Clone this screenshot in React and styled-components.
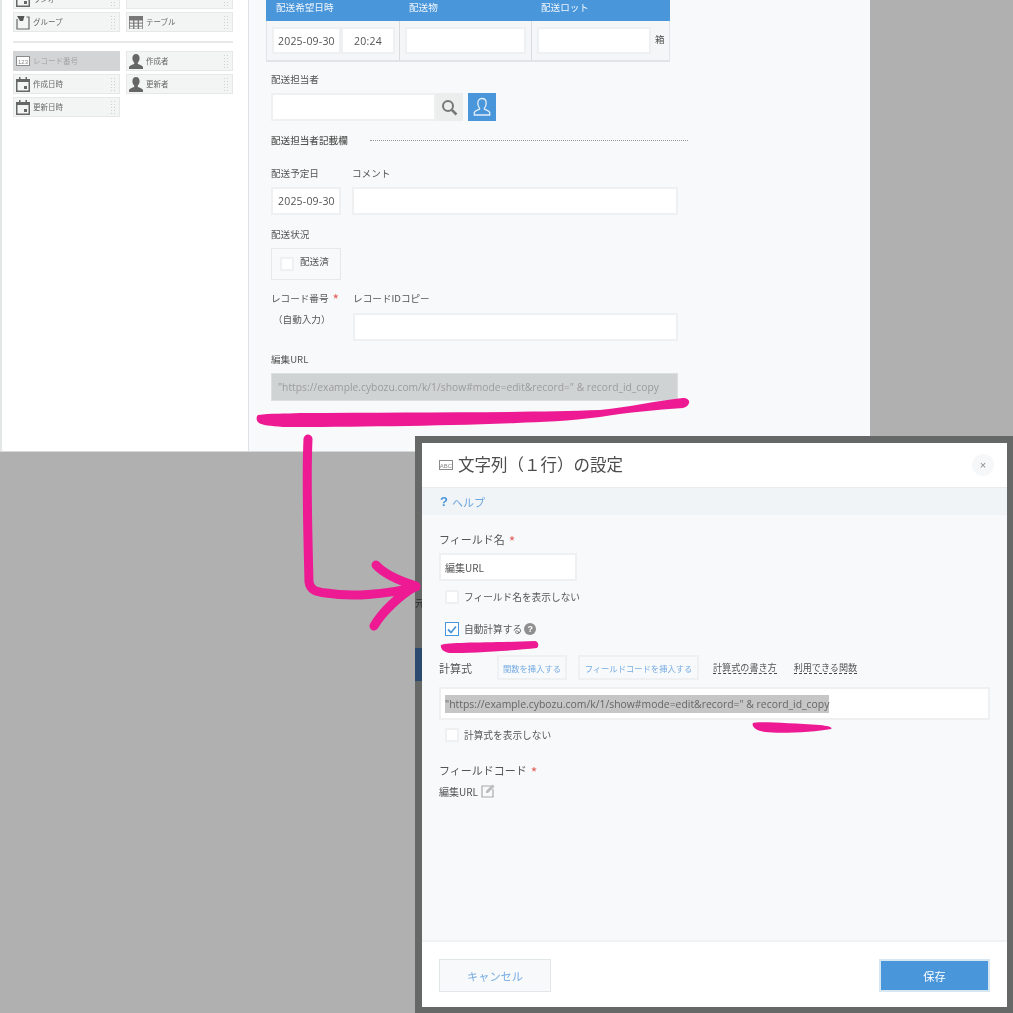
import React from 'react';
import styled, { createGlobalStyle } from 'styled-components';

const Global = createGlobalStyle`
    html, body {
        margin: 0;
        padding: 0;
        background: #b0b0b0;
    }
    body {
        font-family: "Noto Sans CJK JP", "Noto Sans", "Liberation Sans", sans-serif;
        color: #4d4d4d;
        font-size: 10px;
    }
`

const Page = styled.div`
    position: relative;
    width: 1013px;
    height: 1013px;
    overflow: hidden;
    background: #b0b0b0;
`
const Shot = styled.div`
    display: flex;
    width: 870px;
    height: 452px;
    overflow: hidden;
    border-bottom: 1px solid #d8d8d8;
    box-sizing: border-box;
    filter: blur(0.3px);
`

/* left palette */
const Palette = styled.div`
    width: 249px;
    flex: none;
    box-sizing: border-box;
    background: #fff;
    border-left: 2px solid #e4e7e8;
    border-right: 1px solid #dfe3e5;
    padding: 0 15px 0 11px;
`
const PartGrid = styled.div`
    display: grid;
    grid-template-columns: 107px 107px;
    column-gap: 6px;
    row-gap: 3px;
    margin-top: ${p => p.$top || 0}px;
`
const Divider = styled.div`
    height: 2px;
    background: #e6e8e9;
    margin: 9px 0 8px;
`
const Part = styled.div`
    height: 20px;
    display: flex;
    align-items: center;
    gap: 3px;
    box-sizing: border-box;
    padding: 0 2px;
    background: ${p => p.$active ? '#d2d4d5' : '#f3f4f4'};
    border: 1px solid ${p => p.$active ? '#d2d4d5' : '#e6e8e8'};
    color: ${p => p.$active ? '#a2a5a6' : '#666'};
    font-size: 7.5px;
    line-height: 1;
`
const PartName = styled.span`
    flex: 1;
    white-space: nowrap;
`
const Grip = styled.span`
    width: 6px;
    height: 14px;
    margin-right: 1px;
    flex: none;
    background-image: radial-gradient(#cfd1d2 0.8px, transparent 1px);
    background-size: 3px 3px;
`

/* form on the right */
const Form = styled.div`
    flex: 1;
    background: #f7f9fa;
    padding: 0 0 0 17px;
`
const SubTable = styled.div`
    width: 404px;
    margin-top: -6px;
`
const SubHead = styled.div`
    display: grid;
    grid-template-columns: 133px 132px 139px;
    height: 27px;
    align-items: end;
    background: #4a96db;
    color: #eef5fb;
    font-size: 9.6px;
    line-height: 20px;
    padding-bottom: 1px;
    box-sizing: border-box;
    & > span {
        padding-left: 10px;
        padding-bottom: 3px;
    }
`
const SubBody = styled.div`
    display: grid;
    grid-template-columns: 133px 132px 139px;
    height: 41px;
    box-sizing: border-box;
    background: #f5f6f7;
    border: 1px solid #e1e5e7;
    border-top: none;
    border-bottom-width: 2px;
`
const SubCell = styled.div`
    display: flex;
    align-items: flex-start;
    padding: 6px 0 0 5px;
    box-sizing: border-box;
    border-right: ${p => p.$last ? 'none' : '1px solid #d8dcde'};
`
const Box = styled.div`
    width: ${p => p.$w}px;
    height: ${p => p.$h || 28}px;
    flex: none;
    box-sizing: border-box;
    background: #fff;
    border: 2px solid #eef0f2;
    font-size: 10.5px;
    color: #555;
    display: flex;
    align-items: center;
    justify-content: ${p => p.$center ? 'center' : 'flex-start'};
    padding-left: ${p => p.$center ? 0 : (p.$pad || 5)}px;
    white-space: nowrap;
    letter-spacing: 0.2px;
    font-family: "Open Sans", "Noto Sans CJK JP", sans-serif;
`
const NameValue = styled.span`
    font-family: "Noto Sans CJK JP", sans-serif;
    font-size: 10px;
    letter-spacing: 0;
`
const Unit = styled.span`
    font-size: 9.5px;
    margin: 5px 0 0 4px;
`
const Field = styled.div`
    margin-left: 5px;
    margin-top: ${p => p.$top || 0}px;
`
const Label = styled.div`
    font-size: 9.6px;
    line-height: 14px;
    color: #555;
    white-space: nowrap;
    margin-bottom: ${p => p.$bottom ?? 7}px;
`
const Star = styled.span`
    color: #e4605a;
    font-size: 14px;
    line-height: 1;
    vertical-align: -3px;
    margin-left: 4px;
`
const Picker = styled.div`
    display: flex;
`
const SearchBtn = styled.div`
    width: 27px;
    height: 28px;
    background: #eceeee;
    display: flex;
    align-items: center;
    justify-content: center;
`
const UserBtn = styled.div`
    width: 28px;
    height: 28px;
    margin-left: 5px;
    background: #4a96db;
    display: flex;
    align-items: center;
    justify-content: center;
`
const SectionRow = styled.div`
    display: flex;
    align-items: center;
    width: 417px;
    margin: 12px 0 0 5px;
`
const SectionName = styled.span`
    font-size: 9.6px;
    font-weight: 500;
    line-height: 14px;
    color: #555;
    width: 99px;
    flex: none;
    white-space: nowrap;
`
const Dots = styled.span`
    flex: 1;
    border-top: 1px dotted #999;
`
const TwoCols = styled.div`
    display: flex;
    gap: ${p => p.$gap || 11}px;
    margin: ${p => p.$top || 0}px 0 0 5px;
`
const CheckFrame = styled.div`
    width: 70px;
    height: 32px;
    box-sizing: border-box;
    border: 1px solid #e6e8ea;
    display: flex;
    align-items: center;
    padding: 0 0 1px 8px;
    gap: 6px;
    font-size: 9.6px;
    color: #555;
`
const FrameText = styled.span`
    margin-bottom: 5px;
`
const Check = styled.span`
    width: 14px;
    height: 14px;
    flex: none;
    box-sizing: border-box;
    background: #fff;
    border: ${p => p.$on ? '1px solid #4a96db' : '2px solid #eef0f2'};
    display: flex;
    align-items: center;
    justify-content: center;
`
const AutoNote = styled.div`
    font-size: 9.6px;
    line-height: 14px;
    padding-left: 2px;
    margin-top: 6px;
    color: #555;
`
const Computed = styled.div`
    width: 407px;
    height: 28px;
    box-sizing: border-box;
    background: #d0d3d3;
    border: 1px solid #dcdfdf;
    padding-left: 6px;
    display: flex;
    align-items: center;
    color: #999c9d;
    font-size: 10.3px;
    white-space: nowrap;
    font-family: "Open Sans", sans-serif;
`

/* dialog */
const Dialog = styled.div`
    position: absolute;
    left: 415px;
    top: 436px;
    width: 598px;
    height: 577px;
    box-sizing: border-box;
    border: 7px solid #666867;
    border-right-width: 6px;
    border-bottom-width: 6px;
    background: #f7f9fa;
    display: flex;
    flex-direction: column;
    filter: blur(0.3px);
`
const DialogHead = styled.div`
    height: 44px;
    flex: none;
    background: #fff;
    display: flex;
    align-items: center;
    padding: 0 13px 0 17px;
    gap: 5px;
`
const DialogTitle = styled.div`
    flex: 1;
    font-size: 16.5px;
    color: #4d4d4d;
    white-space: nowrap;
    padding-bottom: 3px;
`
const Close = styled.div`
    width: 22px;
    height: 22px;
    border-radius: 50%;
    background: #f6f7f9;
    color: #8a8a8a;
    font-size: 11px;
    display: flex;
    align-items: center;
    justify-content: center;
    font-family: "Liberation Sans", sans-serif;
`
const HelpBar = styled.div`
    height: 28px;
    flex: none;
    background: #f1f4f6;
    border-top: 1px solid #e8ecee;
    box-sizing: border-box;
    padding-left: 18px;
    display: flex;
    align-items: center;
    gap: 4px;
    color: #6ba6e0;
    font-size: 11px;
`
const HelpMark = styled.b`
    font-family: "Liberation Sans", sans-serif;
    font-size: 13px;
    color: #4a96db;
`
const DialogBody = styled.div`
    flex: 1;
    padding: 15px 17px 0;
`
const DLabel = styled.div`
    font-size: 11px;
    line-height: 18px;
    height: 18px;
    color: #555;
    white-space: nowrap;
    margin: ${p => p.$top || 0}px 0 ${p => p.$bottom || 0}px;
`
const CheckRow = styled.label`
    display: flex;
    align-items: center;
    gap: 5px;
    margin: ${p => p.$top || 0}px 0 0 6px;
    height: 14px;
    font-size: 9.7px;
    color: #555;
    white-space: nowrap;
`
const QMark = styled.span`
    width: 12px;
    height: 12px;
    border-radius: 50%;
    background: #8f8f8f;
    color: #fff;
    font-size: 9px;
    font-weight: 700;
    margin-left: -3px;
    display: flex;
    align-items: center;
    justify-content: center;
    font-family: "Liberation Sans", sans-serif;
`
const FormulaTools = styled.div`
    display: flex;
    align-items: center;
    height: 25px;
    margin-top: 19px;
`
const FormulaLabel = styled.span`
    width: 58px;
    font-size: 11px;
    color: #555;
    flex: none;
`
const GhostBtn = styled.span`
    height: 25px;
    box-sizing: border-box;
    border: 2px solid #eef0f2;
    color: #78ace3;
    font-size: 8.3px;
    display: flex;
    align-items: center;
    justify-content: center;
    width: ${p => p.$w}px;
    margin-right: ${p => p.$right}px;
    white-space: nowrap;
`
const DocLink = styled.span`
    font-size: 9.1px;
    line-height: 12px;
    color: #555;
    border-bottom: 1px dashed #444;
    margin-right: 17px;
    white-space: nowrap;
`
const Formula = styled.div`
    width: 551px;
    height: 33px;
    margin-top: 7px;
    box-sizing: border-box;
    background: #fff;
    border: 2px solid #eef0f2;
    padding-left: 4px;
    display: flex;
    align-items: center;
`
const Selected = styled.span`
    background: #c6c6c6;
    color: #666;
    font-size: 10.4px;
    line-height: 18px;
    white-space: nowrap;
    font-family: "Open Sans", sans-serif;
`
const CodeRow = styled.div`
    display: flex;
    align-items: center;
    gap: 3px;
    font-size: 10px;
    color: #555;
    margin-top: 5px;
    height: 14px;
`
const Footer = styled.div`
    height: 67px;
    flex: none;
    background: #fff;
    border-top: 2px solid #f0f2f3;
    box-sizing: border-box;
    padding: 17px 17px 0;
    display: flex;
    justify-content: space-between;
    align-items: flex-start;
`
const FootBtn = styled.div`
    width: ${p => p.$w}px;
    height: 33px;
    box-sizing: border-box;
    display: flex;
    align-items: center;
    justify-content: center;
    font-size: 11.2px;
    background: ${p => p.$primary ? '#4a96db' : '#f7f9fa'};
    color: ${p => p.$primary ? '#fff' : '#78ace3'};
    border: ${p => p.$primary ? '2px solid #d7e6f3' : '1px solid #e1e6e9'};
`
const Behind = styled.span`
    position: absolute;
    left: -7px;
    top: ${p => p.$top}px;
    width: 7px;
    height: ${p => p.$h}px;
    overflow: hidden;
    background: ${p => p.$bg || 'transparent'};
    color: #2a2a2a;
    font-size: 10px;
    line-height: ${p => p.$h}px;
`
const Marks = styled.svg`
    position: absolute;
    left: 0;
    top: 0;
    pointer-events: none;
`

function CalendarIcon() {
    return (
        <svg width="14" height="15" viewBox="0 0 14 15">
            <path d="M3 0h1.500v2h5V0H11v2h3v13H0V2h3z" fill="#666" />
            <rect x="1.500" y="5" width="11" height="8.500" fill="#f3f4f4" />
            <rect x="8" y="9" width="3" height="3" fill="#666" />
        </svg>
    )
}
function PersonIcon() {
    return (
        <svg width="14" height="15" viewBox="0 0 14 15">
            <path d="M7 0c2.400 0 3.600 1.900 3.600 4.200 0 2-.8 3.500-1.800 4.400v1.300c2 .7 4.700 1.500 5.200 3V15H0v-2.100c.5-1.500 3.200-2.300 5.200-3V8.600C4.200 7.700 3.400 6.200 3.400 4.200 3.400 1.900 4.600 0 7 0z" fill="#666" />
        </svg>
    )
}
function GroupIcon() {
    return (
        <svg width="14" height="15" viewBox="0 0 14 15">
            <path d="M1 4v10h12V2h-2.500" fill="none" stroke="#666" strokeWidth="1.200" />
            <path d="M1 1h7.500L7 6H4z" fill="#555" />
        </svg>
    )
}
function TableIcon() {
    return (
        <svg width="14" height="13" viewBox="0 0 14 13">
            <rect width="14" height="13" fill="#777" />
            {[4.5, 7.6, 10.6].map(y => [0.8, 5.4, 10].map(x => (
                <rect key={`${x}-${y}`} x={x} y={y} width="3.300" height="2.100" fill="#f3f4f4" />
            )))}
        </svg>
    )
}
function TagIcon({ label }) {
    return (
        <svg width="14" height="10" viewBox="0 0 14 10">
            <rect x="0.500" y="0.500" width="13" height="9" fill="#fff" stroke="#8a8a8a" />
            <text x="7" y="7.500" textAnchor="middle" fontSize="6" fill="#888" fontFamily="Liberation Sans">{label}</text>
        </svg>
    )
}

function Parts({ items }) {
    return items.map((item, i) => (
        <Part key={i} $active={item.active}>
            {item.icon}
            <PartName>{item.name}</PartName>
            <Grip />
        </Part>
    ))
}

const firstParts = [
    { name: 'ラジオ', icon: <CalendarIcon /> },
    { name: '', icon: null },
    { name: 'グループ', icon: <GroupIcon /> },
    { name: 'テーブル', icon: <TableIcon /> },
]
const recordParts = [
    { name: 'レコード番号', icon: <TagIcon label="123" />, active: true },
    { name: '作成者', icon: <PersonIcon /> },
    { name: '作成日時', icon: <CalendarIcon /> },
    { name: '更新者', icon: <PersonIcon /> },
    { name: '更新日時', icon: <CalendarIcon /> },
]

const FORMULA = '"https://example.cybozu.com/k/1/show#mode=edit&record=" & record_id_copy';

function App() {
    return (
        <Page>
            <Global />
            <Shot>
                <Palette>
                    <PartGrid $top={-11}>
                        <Parts items={firstParts} />
                    </PartGrid>
                    <Divider />
                    <PartGrid>
                        <Parts items={recordParts} />
                    </PartGrid>
                </Palette>
                <Form>
                    <SubTable>
                        <SubHead>
                            <span>配送希望日時</span>
                            <span>配送物</span>
                            <span>配送ロット</span>
                        </SubHead>
                        <SubBody>
                            <SubCell>
                                <Box $w={69} $h={27} $pad={4}>2025-09-30</Box>
                                <Box $w={54} $h={27} $center>20:24</Box>
                            </SubCell>
                            <SubCell>
                                <Box $w={121} $h={27} />
                            </SubCell>
                            <SubCell $last>
                                <Box $w={114} $h={27} />
                                <Unit>箱</Unit>
                            </SubCell>
                        </SubBody>
                    </SubTable>
                    <Field $top={10}>
                        <Label>配送担当者</Label>
                        <Picker>
                            <Box $w={165} />
                            <SearchBtn>
                                <svg width="17" height="17" viewBox="0 0 17 17">
                                    <circle cx="7" cy="7" r="5" fill="none" stroke="#777" strokeWidth="2" />
                                    <path d="M10.800 10.800L15.500 15.500" stroke="#777" strokeWidth="2.600" />
                                </svg>
                            </SearchBtn>
                            <UserBtn>
                                <svg width="20" height="20" viewBox="0 0 20 20">
                                    <path d="M10 1.500c2.700 0 4.200 2 4.200 4.800 0 2-.8 3.600-1.700 4.600v1.300c1.700.7 4.500 1.400 5.200 3v2.800H2.300v-2.800c.7-1.600 3.500-2.300 5.200-3v-1.300c-.9-1-1.700-2.600-1.700-4.600 0-2.800 1.500-4.800 4.200-4.800z" fill="none" stroke="#e2eefa" strokeWidth="1.300" />
                                </svg>
                            </UserBtn>
                        </Picker>
                    </Field>
                    <SectionRow>
                        <SectionName>配送担当者記載欄</SectionName>
                        <Dots />
                    </SectionRow>
                    <TwoCols $top={19}>
                        <div>
                            <Label>配送予定日</Label>
                            <Box $w={70}>2025-09-30</Box>
                        </div>
                        <div>
                            <Label>コメント</Label>
                            <Box $w={326} />
                        </div>
                    </TwoCols>
                    <Field $top={12}>
                        <Label>配送状況</Label>
                        <CheckFrame><Check /><FrameText>配送済</FrameText></CheckFrame>
                    </Field>
                    <TwoCols $top={11} $gap={14}>
                        <div>
                            <Label $bottom={6}>レコード番号<Star>*</Star></Label>
                            <AutoNote>（自動入力）</AutoNote>
                        </div>
                        <div>
                            <Label $bottom={8}>レコードIDコピー</Label>
                            <Box $w={325} />
                        </div>
                    </TwoCols>
                    <Field $top={11}>
                        <Label>編集URL</Label>
                        <Computed>{FORMULA}</Computed>
                    </Field>
                </Form>
            </Shot>

            <Dialog>
                <Behind $top={153} $h={14}>元</Behind>
                <Behind $top={205} $h={33} $bg="#2b4a6f" />
                <DialogHead>
                    <TagIcon label="ABC" />
                    <DialogTitle>文字列（１行）の設定</DialogTitle>
                    <Close>×</Close>
                </DialogHead>
                <HelpBar>
                    <HelpMark>?</HelpMark>ヘルプ
                </HelpBar>
                <DialogBody>
                    <DLabel $bottom={5}>フィールド名<Star>*</Star></DLabel>
                    <Box $w={138} $pad={4}>
                        <NameValue>編集URL</NameValue>
                    </Box>
                    <CheckRow $top={9}><Check />フィールド名を表示しない</CheckRow>
                    <CheckRow $top={18}>
                        <Check $on>
                            <svg width="10" height="9" viewBox="0 0 10 9">
                                <path d="M1 4.500L4 7.500L9 1.500" fill="none" stroke="#4a96db" strokeWidth="1.800" />
                            </svg>
                        </Check>
                        自動計算する<QMark>?</QMark>
                    </CheckRow>
                    <FormulaTools>
                        <FormulaLabel>計算式</FormulaLabel>
                        <GhostBtn $w={70} $right={11}>関数を挿入する</GhostBtn>
                        <GhostBtn $w={121} $right={14}>フィールドコードを挿入する</GhostBtn>
                        <DocLink>計算式の書き方</DocLink>
                        <DocLink>利用できる関数</DocLink>
                    </FormulaTools>
                    <Formula><Selected>{FORMULA}</Selected></Formula>
                    <CheckRow $top={8}><Check />計算式を表示しない</CheckRow>
                    <DLabel $top={19}>フィールドコード<Star>*</Star></DLabel>
                    <CodeRow>
                        編集URL
                        <svg width="14" height="14" viewBox="0 0 14 14">
                            <path d="M10 2H1v11h11V5" fill="none" stroke="#aaa" strokeWidth="1.200" />
                            <path d="M5 7l6.500-6.500 2 2L7 9H5z" fill="#bbb" />
                        </svg>
                    </CodeRow>
                </DialogBody>
                <Footer>
                    <FootBtn $w={112}>キャンセル</FootBtn>
                    <FootBtn $w={111} $primary>保存</FootBtn>
                </Footer>
            </Dialog>

            <Marks width="1013" height="1013" viewBox="0 0 1013 1013">
                <path d="M258 415C270 413 285 414 300 413C400 412 520 413 600 410C630 407 655 401 683 398C688 398 690 401 689 403C688 406 686 407 683 408C655 410 630 412 600 417C570 421 540 422 517 423C440 426 350 427 283 427C270 426 262 425 259 423C256 421 256 417 258 415Z" fill="#ed1a93" />
                <path d="M308 439C306 480 308 540 309 582C310 590 316 592 326 593C350 597 385 595 416 587M376 565C385 575 400 581 416 586C400 595 382 612 374 626" fill="none" stroke="#ed1a93" strokeWidth="9" strokeLinecap="round" strokeLinejoin="round" />
                <path d="M441 645C450 642 490 643 535 641C539 642 539 646 537 648C510 651 470 653 450 653C443 652 440 648 441 645Z" fill="#ed1a93" />
                <path d="M753 723C756 721 790 723 820 725C828 726 833 727 831 729C815 732 780 734 765 732C757 731 751 727 753 723Z" fill="#ed1a93" />
            </Marks>
        </Page>
    )
}

export default App;
